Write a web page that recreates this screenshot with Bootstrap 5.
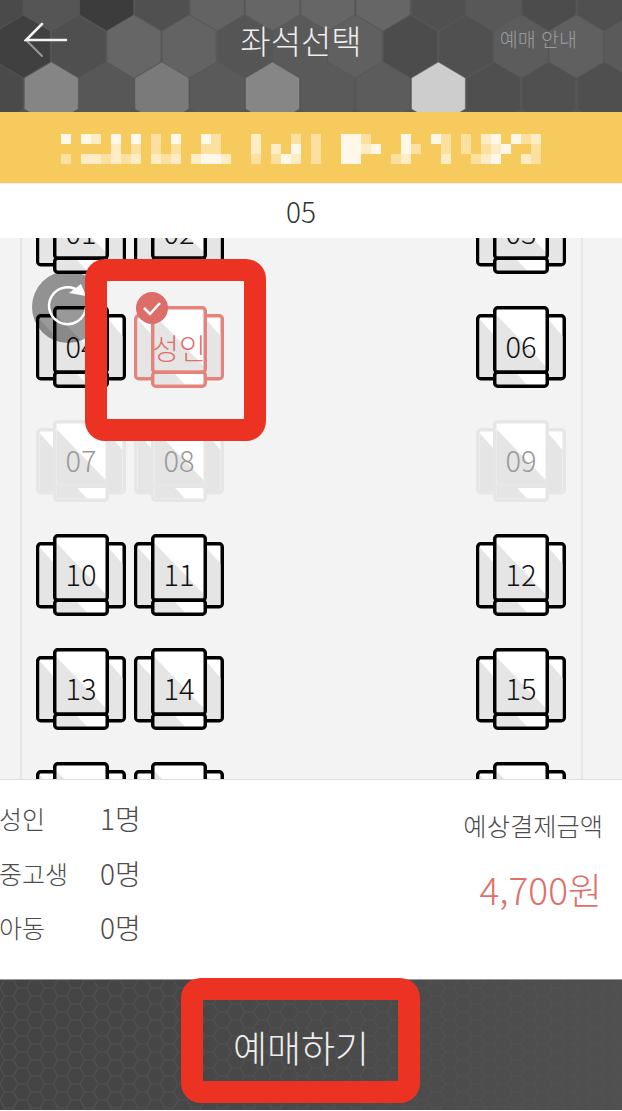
<!DOCTYPE html>
<html lang="ko">
<head>
    <meta charset="UTF-8">
    <meta name="viewport" content="width=device-width, initial-scale=1.0">
    <title>좌석선택</title>
    <link href="https://cdn.jsdelivr.net/npm/bootstrap@5.3.0/dist/css/bootstrap.min.css" rel="stylesheet">
    <style>
        body {
            font-family: "Noto Sans CJK KR", "Noto Sans", sans-serif;
            font-weight: 300;
            background-color: #fff;
            width: 622px;
            height: 1111px;
            overflow: hidden;
        }
        .app-shell { height: 1111px; }
        .top-bar {
            height: 112px;
            background-color: #555;
            overflow: hidden;
            padding-right: 20px;
        }
        .hex-bg { inset: 0; width: 100%; height: 100%; }
        .back-arrow { left: 24px; top: 22px; }
        .top-title { font-size: 33px; line-height: 1; color: #eee; padding-top: 24px; }
        .top-guide { right: 45px; top: 29px; font-size: 19.500px; line-height: 1; color: #9c9c9c; }
        .route-bar { height: 71px; background-color: #f7ca5e; }
        .floor-bar {
            height: 55px;
            font-size: 28px;
            color: #333;
            border-top: 1px solid #eee;
            padding-right: 20px;
        }
        .seat-map {
            background-color: #f3f3f3;
            height: 541px;
            overflow: hidden;
        }
        .seat-rails {
            margin-left: 20px;
            width: 563px;
            height: 100%;
            border-left: 2px solid #e6e6e6;
            border-right: 2px solid #e6e6e6;
            padding: 0 15px 0 14px;
        }
        .seat-rows { margin-top: -46px; row-gap: 32px; }
        .seat-cell { width: 90px; height: 82px; font-size: 29px; color: #111; flex: none; }
        .seat-cell svg { display: block; color: #000; }
        .seat-num { left: 0; right: 0; top: 18px; text-align: center; line-height: 42px; }
        .seat-off svg { color: #e6e6e6; }
        .seat-off .seat-num { color: #999; }
        .seat-picked svg { color: #e4827c; }
        .seat-picked .seat-num { color: #e06f68; top: 20px; }
        .seat-check { left: 2px; top: -14px; }
        .refresh-btn {
            left: 32px;
            top: 33px;
            width: 72px;
            height: 72px;
            border-radius: 50%;
            background-color: rgba(0, 0, 0, .4);
        }
        .mark-box {
            border: 22px solid #ec3323;
            border-radius: 20px;
        }
        .mark-seat { left: 85px; top: 21px; width: 181px; height: 182px; }
        .mark-buy { left: 181px; top: -2px; width: 239px; height: 125px; }
        .summary {
            height: 200px;
            border-top: 1px solid #ddd;
            color: #4c4c4c;
            padding-top: 18px;
        }
        .count-row { height: 54.500px; font-size: 25px; line-height: 40px; }
        .count-label { width: 101px; margin-left: -1px; }
        .count-value { font-size: 28px; }
        .price-label { font-size: 25.300px; line-height: 40px; margin-top: 7px; padding-right: 19px; text-align: right; }
        .price-value { font-size: 37px; line-height: 48px; margin-top: 20px; padding-right: 20px; text-align: right; color: #e06f68; }
        .buy-bar {
            height: 131px;
            background: linear-gradient(100deg, #434343, #505050);
            border-top: 1px solid #999;
            padding-right: 20px;
        }
        .buy-label { font-size: 37px; color: #eee; line-height: 1; padding-top: 4px; }
    </style>
</head>
<body>
    <svg width="0" height="0" class="position-absolute">
        <symbol id="seat" viewBox="0 0 90 82">
            <g fill="#fff" stroke="currentColor" stroke-width="3.500">
                <rect x="1.750" y="9.750" width="18" height="63" rx="3"/>
                <rect x="70.250" y="9.750" width="18" height="63" rx="3"/>
            </g>
            <g fill="#e5e5e5">
                <path d="M3.500 13 18 29V71H3.500Z"/>
                <path d="M72 13 86.500 30V71H72Z"/>
            </g>
            <rect x="18.750" y="1.750" width="52.500" height="64.500" rx="3" fill="#fff"/>
            <path d="M20.500 9 69.500 60V64.500H20.500Z" fill="#e5e5e5"/>
            <rect x="18.750" y="1.750" width="52.500" height="64.500" rx="3" fill="none" stroke="currentColor" stroke-width="3.500"/>
            <rect x="18.750" y="66.250" width="52.500" height="14" rx="3" fill="#fff"/>
            <path d="M20.500 68H41L51 78.500H20.500Z" fill="#e5e5e5"/>
            <rect x="18.750" y="66.250" width="52.500" height="14" rx="3" fill="none" stroke="currentColor" stroke-width="3.500"/>
        </symbol>
    </svg>

    <div class="app-shell d-flex flex-column">
        <header class="top-bar position-relative text-center">
            <svg class="hex-bg position-absolute" id="hexBg" viewBox="0 0 622 112"></svg>
            <svg class="back-arrow position-absolute" width="44" height="36" viewBox="0 0 44 36" fill="none" stroke-linecap="round">
                <path d="M2 18 18 34" stroke="#9a9a9a" stroke-width="2"/>
                <path d="M18 2 2 18H42" stroke="#f4f4f4" stroke-width="2.500"/>
            </svg>
            <div class="top-title position-relative">좌석선택</div>
            <div class="top-guide position-absolute">예매 안내</div>
        </header>

        <div class="route-bar d-flex align-items-center">
            <svg id="blurText" width="622" height="71" viewBox="0 0 622 71"></svg>
        </div>

        <div class="floor-bar d-flex align-items-center justify-content-center">05</div>

        <div class="seat-map position-relative">
            <div class="seat-rails d-flex flex-column">
                <div class="seat-rows d-flex flex-column">
                    <div class="d-flex gap-2">
                        <div class="seat-cell position-relative"><svg width="90" height="82"><use href="#seat"/></svg><span class="seat-num position-absolute">01</span></div>
                        <div class="seat-cell position-relative"><svg width="90" height="82"><use href="#seat"/></svg><span class="seat-num position-absolute">02</span></div>
                        <div class="seat-cell position-relative ms-auto"><svg width="90" height="82"><use href="#seat"/></svg><span class="seat-num position-absolute">03</span></div>
                    </div>
                    <div class="d-flex gap-2">
                        <div class="seat-cell position-relative"><svg width="90" height="82"><use href="#seat"/></svg><span class="seat-num position-absolute">04</span></div>
                        <div class="seat-cell seat-picked position-relative">
                            <svg width="90" height="82"><use href="#seat"/></svg>
                            <span class="seat-num position-absolute">성인</span>
                            <svg class="seat-check position-absolute" width="32" height="32" viewBox="0 0 32 32">
                                <circle cx="16" cy="16" r="16" fill="#dd6d68"/>
                                <path d="M8 16l6 6 10-11" fill="none" stroke="#fff" stroke-width="2.500"/>
                            </svg>
                        </div>
                        <div class="seat-cell position-relative ms-auto"><svg width="90" height="82"><use href="#seat"/></svg><span class="seat-num position-absolute">06</span></div>
                    </div>
                    <div class="d-flex gap-2">
                        <div class="seat-cell seat-off position-relative"><svg width="90" height="82"><use href="#seat"/></svg><span class="seat-num position-absolute">07</span></div>
                        <div class="seat-cell seat-off position-relative"><svg width="90" height="82"><use href="#seat"/></svg><span class="seat-num position-absolute">08</span></div>
                        <div class="seat-cell seat-off position-relative ms-auto"><svg width="90" height="82"><use href="#seat"/></svg><span class="seat-num position-absolute">09</span></div>
                    </div>
                    <div class="d-flex gap-2">
                        <div class="seat-cell position-relative"><svg width="90" height="82"><use href="#seat"/></svg><span class="seat-num position-absolute">10</span></div>
                        <div class="seat-cell position-relative"><svg width="90" height="82"><use href="#seat"/></svg><span class="seat-num position-absolute">11</span></div>
                        <div class="seat-cell position-relative ms-auto"><svg width="90" height="82"><use href="#seat"/></svg><span class="seat-num position-absolute">12</span></div>
                    </div>
                    <div class="d-flex gap-2">
                        <div class="seat-cell position-relative"><svg width="90" height="82"><use href="#seat"/></svg><span class="seat-num position-absolute">13</span></div>
                        <div class="seat-cell position-relative"><svg width="90" height="82"><use href="#seat"/></svg><span class="seat-num position-absolute">14</span></div>
                        <div class="seat-cell position-relative ms-auto"><svg width="90" height="82"><use href="#seat"/></svg><span class="seat-num position-absolute">15</span></div>
                    </div>
                    <div class="d-flex gap-2">
                        <div class="seat-cell position-relative"><svg width="90" height="82"><use href="#seat"/></svg></div>
                        <div class="seat-cell position-relative"><svg width="90" height="82"><use href="#seat"/></svg></div>
                        <div class="seat-cell position-relative ms-auto"><svg width="90" height="82"><use href="#seat"/></svg></div>
                    </div>
                </div>
            </div>

            <div class="refresh-btn position-absolute">
                <svg width="72" height="72" viewBox="0 0 72 72" fill="none">
                    <path d="M48 21A18.500 18.500 0 1 0 54 36" stroke="#fff" stroke-width="2.500"/>
                    <path d="M37 22 49 13 54 25Z" fill="#fff"/>
                </svg>
            </div>
            <div class="mark-box mark-seat position-absolute"></div>
        </div>

        <div class="summary d-flex justify-content-between">
            <div>
                <div class="count-row d-flex"><span class="count-label">성인</span><span class="count-value">1명</span></div>
                <div class="count-row d-flex"><span class="count-label">중고생</span><span class="count-value">0명</span></div>
                <div class="count-row d-flex"><span class="count-label">아동</span><span class="count-value">0명</span></div>
            </div>
            <div>
                <div class="price-label">예상결제금액</div>
                <div class="price-value">4,700원</div>
            </div>
        </div>

        <div class="buy-bar position-relative d-flex align-items-center justify-content-center">
            <svg class="hex-bg position-absolute">
                <defs>
                    <pattern id="comb" width="26.700" height="16" patternUnits="userSpaceOnUse">
                        <path d="M0 8 4.450 0H13.350L17.800 8 13.350 16H4.450ZM17.800 8H26.700" fill="none" stroke="#525252" stroke-width="1"/>
                    </pattern>
                </defs>
                <rect width="100%" height="100%" fill="url(#comb)"/>
            </svg>
            <span class="buy-label position-relative">예매하기</span>
            <div class="mark-box mark-buy position-absolute"></div>
        </div>
    </div>

    <script src="https://cdn.jsdelivr.net/npm/bootstrap@5.3.0/dist/js/bootstrap.bundle.min.js"></script>
    <script>
        // header honeycomb: grey of each cell, row by row
        const hexRows = [
            { y: -1, x0: -4, cells: ['4a', '55', '3c', '50', '63', '66', '66', '66', '50', '58', '4c', '50'] },
            { y: 46, x0: -32, cells: ['4a', '40', '4f', '66', '63', '55', '5a', '60', '4c', '50', '5c', '60', '5a'] },
            { y: 93, x0: -4, cells: ['4a', '85', '57', '7a', '5a', '86', '5a', '5c', 'cd', '4f', '50', '4f'] }
        ];
        let hexes = '';
        hexRows.forEach(row => {
            row.cells.forEach((c, i) => {
                const cx = row.x0 + i * 55.3;
                const pts = [[0, -31], [27, -15], [27, 16], [0, 32], [-27, 16], [-27, -15]]
                    .map(p => (cx + p[0]) + ',' + (row.y + p[1])).join(' ');
                hexes += `<polygon points="${pts}" fill="#${c}${c}${c}" stroke="#5a5a5a" stroke-opacity=".6" stroke-width="1"/>`;
            });
        });
        document.getElementById('hexBg').innerHTML = hexes;

        // pixelated route text, one string per row of 10px blocks
        const blurRows = [
            '3 32 3 3 1 3  31   2   1 1  331   3  31 1 23 312',
            '     2 1 1 1  11   2 2 3 1  3323  31  1 1 123  1',
            '1 221212 212 2332  1 132 1  33   12   2  123  21'
        ];
        const levels = { 1: '#fbe0a0', 2: '#fdecc4', 3: '#fff8e8' };
        let blocks = '';
        blurRows.forEach((row, r) => {
            [...row].forEach((ch, i) => {
                if (levels[ch]) blocks += `<rect x="${61 + i * 10}" y="${22 + r * 10}" width="10" height="10" fill="${levels[ch]}"/>`;
            });
        });
        document.getElementById('blurText').innerHTML = blocks;
    </script>
</body>
</html>
